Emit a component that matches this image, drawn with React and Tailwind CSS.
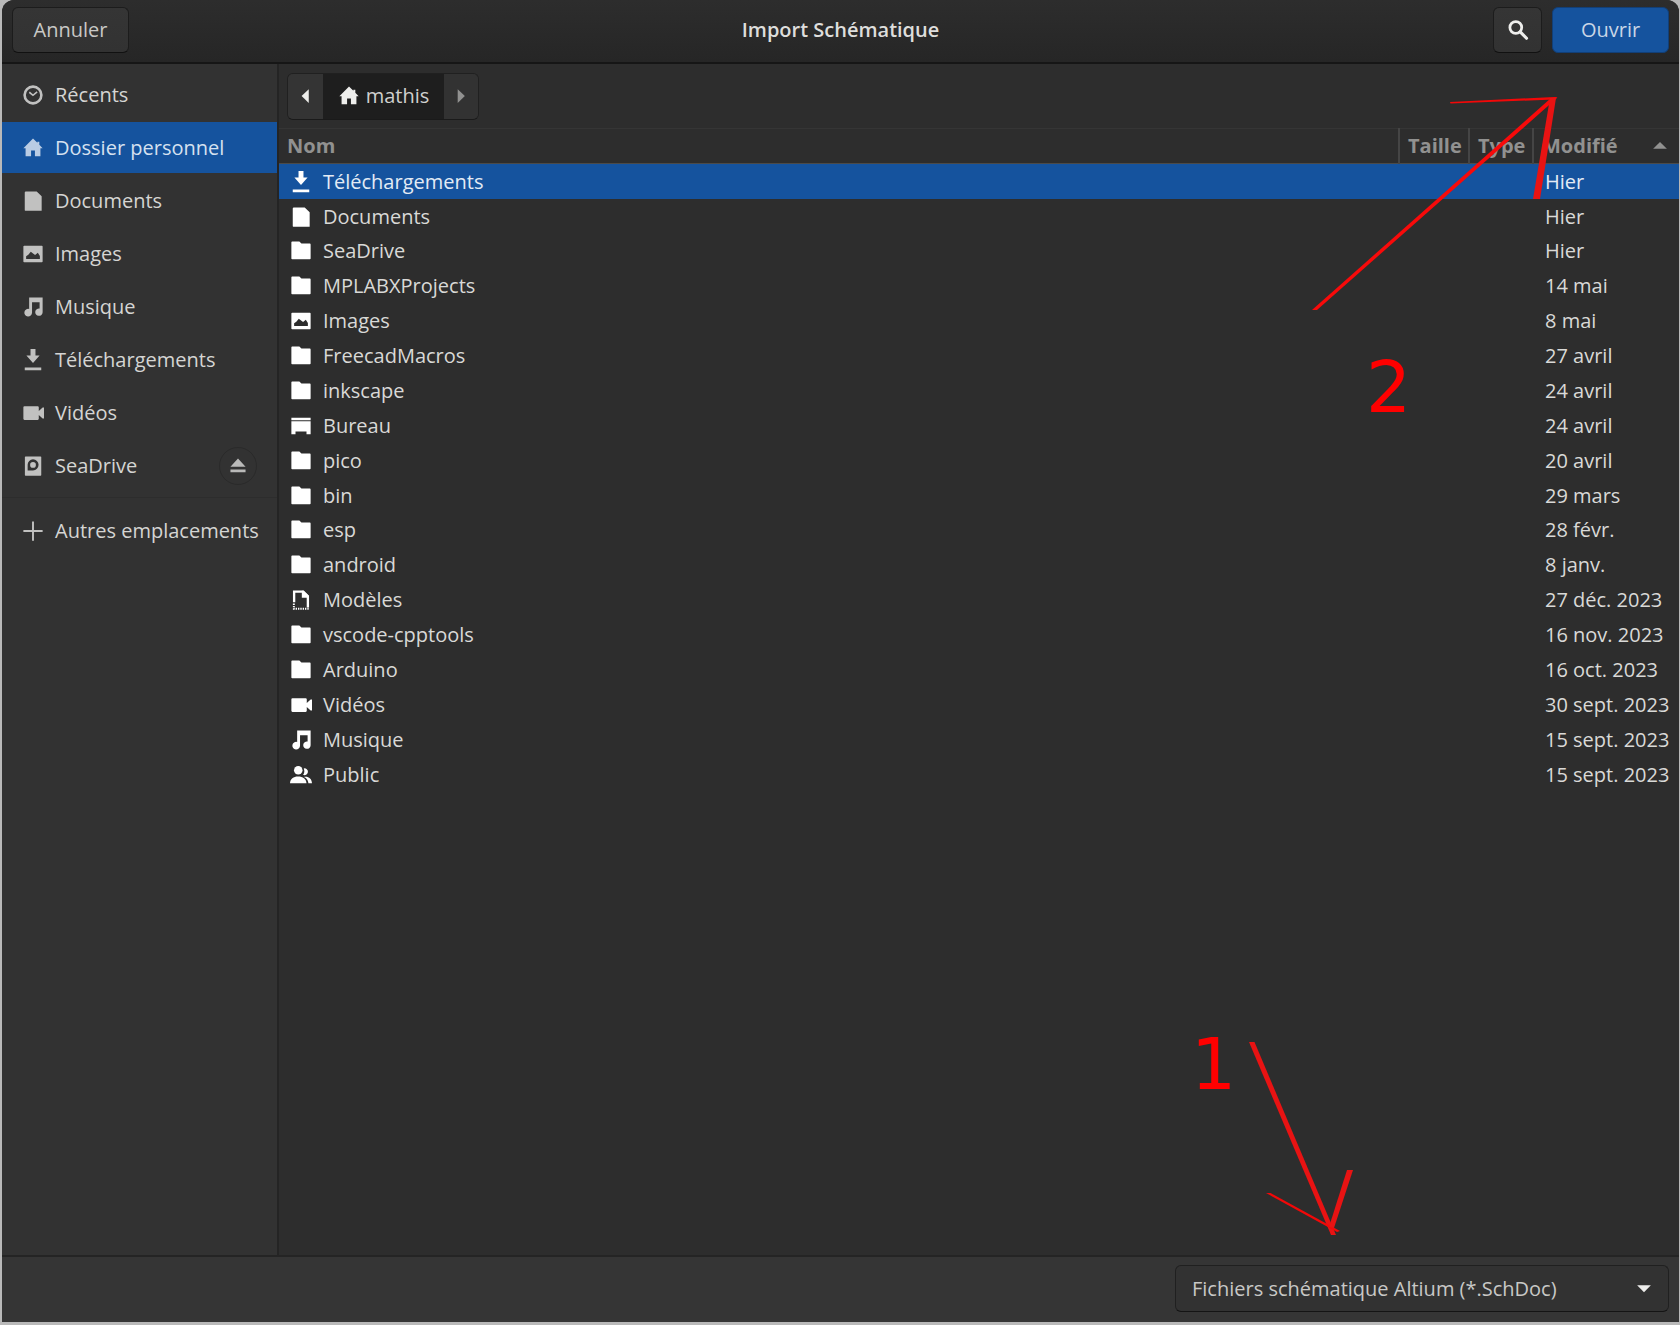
import React, { useState } from 'react';

const ICONS = {
    recent: (
        <>
            <circle cx="8" cy="8" r="6.1" fill="none" stroke="currentColor" strokeWidth="1.9" />
            <path d="M5.3 6 8 8.2 11 5.8" fill="none" stroke="currentColor" strokeWidth="1.2" />
        </>
    ),
    home: <path d="M8 1 1 8.2h1.6V14h4V9.8h2.8V14h4V8.2H15L12.6 5.6V3.4h-1.4v.8z" />,
    documents: <path d="M2.8 1h7.9l3.6 3.6V15H2.4a.4.4 0 0 1-.4-.4V1.8a.8.8 0 0 1 .8-.8z" />,
    images: (
        <path
            fillRule="evenodd"
            d="M1.6 2h12.8a.6.6 0 0 1 .6.6v10.8a.6.6 0 0 1-.6.6H1.6a.6.6 0 0 1-.6-.6V2.6a.6.6 0 0 1 .6-.6zM3 11.6h10V9.4l-1.5-2.3-2 1.7L6.4 6.3 4.6 8.6 3 9.6z"
        />
    ),
    music: (
        <path d="M5.2 1H15v10.8a2.7 2.7 0 1 1-2.2-2.7V4.6H7.3v7.6a2.8 2.8 0 1 1-2.1-2.8z" />
    ),
    download: <path d="M6.2 0h3.6v4.8H12.8L8 10.2 3.2 4.8h3zM2 13.4h12v2H2z" />,
    videos: <path d="M1.8 3h9.6a.8.8 0 0 1 .8.8v2.7L15 4h1v8h-1l-2.8-2.5v2.7a.8.8 0 0 1-.8.8H1.8a.8.8 0 0 1-.8-.8V3.8A.8.8 0 0 1 1.8 3z" />,
    drive: (
        <path
            fillRule="evenodd"
            d="M2.6 1h10.9a.5.5 0 0 1 .5.5v13a.5.5 0 0 1-.5.5H2.6a.5.5 0 0 1-.5-.5v-13a.5.5 0 0 1 .5-.5zM8 3.1a4 4 0 0 0-3.9 4v4.1H8a4 4 0 0 0 0-8.1zm0 2a2.1 2.1 0 1 1 0 4.2 2.1 2.1 0 0 1 0-4.2z"
        />
    ),
    plus: <path d="M7.3 1h1.4v6.3H15v1.4H8.7V15H7.3V8.7H1V7.3h6.3z" />,
    folder: <path d="M1.6 1h5.2l1.5 1.6h6.1a.6.6 0 0 1 .6.6v10.2a.6.6 0 0 1-.6.6H1.6a.6.6 0 0 1-.6-.6V1.6A.6.6 0 0 1 1.6 1z" />,
    desktop: <path d="M1 2h14v1.8H1zM1 4.6h14V14h-3v-2H4v2H1z" />,
    templates: (
        <>
            <path d="M3 9.6V1.9h6.6L13 5.3v8.1" fill="none" stroke="currentColor" strokeWidth="1.7" />
            <path d="M8.6 1.2h1.3L13.8 5v1.3H8.6z" />
            <path d="M2.8 10.6v3.8h11" fill="none" stroke="currentColor" strokeWidth="1.4" strokeDasharray="1 .7" />
        </>
    ),
    public: (
        <>
            <circle cx="6" cy="4.6" r="3.1" />
            <path d="M10 3.2a2.5 2.5 0 1 1-.5 4.7 4.8 4.8 0 0 0 .5-4.7zM0 14c.2-3.4 2.4-5 5.9-5s5.9 1.6 6.1 5zM10.2 9.4c3.4-.4 5.6 1.2 5.8 4.6h-2.6c-.2-2.2-1.2-3.7-3.2-4.6z" />
        </>
    ),
    eject: <path d="M8 2.5 13.5 8.600h-11zM2.500 10.600h11v2h-11z" />,
    search: (
        <>
            <circle cx="6.4" cy="6.2" r="4.3" fill="none" stroke="currentColor" strokeWidth="2" />
            <path d="m9.6 9.4 4.6 4.6" fill="none" stroke="currentColor" strokeWidth="2.3" strokeLinecap="round" />
        </>
    ),
    left: <path d="M10 3v10L4.8 8z" />,
    right: <path d="M5.6 3v10L10.800 8z" />,
    up: <path d="M8 5l5 5H3z" />,
    down: <path d="M8 11 3 6h10z" />,
};

const Icon = ({ name, className = '' }) => (
    <svg viewBox="0 0 16 16" fill="currentColor" className={`size-[22px] shrink-0 ${className}`} aria-hidden="true">
        {ICONS[name]}
    </svg>
);

const PLACES = [
    { icon: 'recent', label: 'Récents' },
    { icon: 'home', label: 'Dossier personnel' },
    { icon: 'documents', label: 'Documents' },
    { icon: 'images', label: 'Images' },
    { icon: 'music', label: 'Musique' },
    { icon: 'download', label: 'Téléchargements' },
    { icon: 'videos', label: 'Vidéos' },
    { icon: 'drive', label: 'SeaDrive', ejectable: true },
];

const FILES = [
    { icon: 'download', name: 'Téléchargements', modified: 'Hier' },
    { icon: 'documents', name: 'Documents', modified: 'Hier' },
    { icon: 'folder', name: 'SeaDrive', modified: 'Hier' },
    { icon: 'folder', name: 'MPLABXProjects', modified: '14 mai' },
    { icon: 'images', name: 'Images', modified: '8 mai' },
    { icon: 'folder', name: 'FreecadMacros', modified: '27 avril' },
    { icon: 'folder', name: 'inkscape', modified: '24 avril' },
    { icon: 'desktop', name: 'Bureau', modified: '24 avril' },
    { icon: 'folder', name: 'pico', modified: '20 avril' },
    { icon: 'folder', name: 'bin', modified: '29 mars' },
    { icon: 'folder', name: 'esp', modified: '28 févr.' },
    { icon: 'folder', name: 'android', modified: '8 janv.' },
    { icon: 'templates', name: 'Modèles', modified: '27 déc. 2023' },
    { icon: 'folder', name: 'vscode-cpptools', modified: '16 nov. 2023' },
    { icon: 'folder', name: 'Arduino', modified: '16 oct. 2023' },
    { icon: 'videos', name: 'Vidéos', modified: '30 sept. 2023' },
    { icon: 'music', name: 'Musique', modified: '15 sept. 2023' },
    { icon: 'public', name: 'Public', modified: '15 sept. 2023' },
];

const Header = () => (
    <header className="grid h-16 grid-cols-[1fr_auto_1fr] items-center border-b-2 border-[#161616] bg-linear-to-b from-[#2d2d2d] to-[#262626] px-2.5 pb-0.5">
        <button className="h-[46px] w-[117px] rounded-md border border-[#1c1c1c] border-b-[#111] bg-linear-to-b from-[#353535] to-[#323232] text-[#c8c8c6]">
            Annuler
        </button>
        <h1 className="font-semibold text-[#dededc]">Import Schématique</h1>
        <div className="flex justify-end gap-2.5">
            <button
                aria-label="Rechercher"
                className="flex h-[46px] w-[49px] items-center justify-center rounded-md border border-[#1c1c1c] border-b-[#111] bg-linear-to-b from-[#353535] to-[#323232] text-[#eeeeec]"
            >
                <Icon name="search" />
            </button>
            <button className="h-[46px] w-[117px] rounded-md border border-[#123f77] bg-[#15539e] text-[#c9d6e6]">Ouvrir</button>
        </div>
    </header>
);

const Sidebar = ({ current, onSelect }) => (
    <nav className="flex w-[277px] shrink-0 flex-col border-r-2 border-[#242424] bg-[#323232] pt-[5px]">
        <ul className="flex flex-col gap-0.5">
            {PLACES.map((place) => (
                <li key={place.label} className={`flex h-[51px] items-center pr-5 ${place.label === current ? 'bg-[#15539e]' : ''}`}>
                    <button
                        onClick={() => onSelect(place.label)}
                        className={`flex h-full flex-1 items-center gap-[11px] pl-5 text-left ${place.label === current ? 'text-[#d5e1f0]' : 'text-[#d5d5d3]'}`}
                    >
                        <Icon name={place.icon} className={place.label === current ? 'text-[#b9cce4]' : 'text-[#c1c1c0]'} />
                        {place.label}
                    </button>
                    {place.ejectable && (
                        <button
                            aria-label="Éjecter"
                            className="flex size-[38px] items-center justify-center rounded-full border border-[#2a2a2a] text-[#b9b9b8]"
                        >
                            <Icon name="eject" />
                        </button>
                    )}
                </li>
            ))}
        </ul>
        <hr className="mt-1.5 mb-[7px] border-[#2d2d2d]" />
        <button className="flex h-[51px] items-center gap-[11px] pl-5 text-left whitespace-nowrap text-[#d5d5d3]">
            <Icon name="plus" className="text-[#c1c1c0]" />
            Autres emplacements
        </button>
    </nav>
);

const PathBar = () => (
    <div className="flex h-16 items-center px-2">
        <div className="flex h-[47px] overflow-hidden rounded-md border border-[#202020] border-b-[#1a1a1a]">
            <button aria-label="Précédent" className="flex w-[35px] items-center justify-center bg-[#343434] text-[#eeeeec]">
                <Icon name="left" />
            </button>
            <button className="flex w-[121px] items-center justify-center gap-1.5 bg-[#1e1e1e] text-[#d0d0ce]">
                <Icon name="home" className="text-[#eeeeec]" />
                mathis
            </button>
            <button aria-label="Suivant" className="flex w-[34px] items-center justify-center bg-[#323232] text-[#919190]">
                <Icon name="right" />
            </button>
        </div>
    </div>
);

const FileTable = ({ selected, onSelect }) => (
    <table className="h-[664px] w-full table-fixed border-collapse text-left">
        <colgroup>
            <col />
            <col className="w-[70px]" />
            <col className="w-16" />
            <col className="w-[146px]" />
        </colgroup>
        <thead className="text-[#919190]">
            <tr className="h-[35px] border-t border-b border-t-[#353535] border-b-[#4b4b4a]">
                <th className="px-2 py-0 font-bold">Nom</th>
                <th className="border-l-2 border-[#454545] px-2 py-0 font-bold">Taille</th>
                <th className="border-l-2 border-[#454545] px-2 py-0 font-bold">Type</th>
                <th className="border-l-2 border-[#454545] px-2 py-0 font-bold" aria-sort="descending">
                    <div className="flex items-center justify-between">
                        Modifié
                        <Icon name="up" />
                    </div>
                </th>
            </tr>
        </thead>
        <tbody>
            {FILES.map((file) => (
                <tr
                    key={file.name}
                    onClick={() => onSelect(file.name)}
                    className={file.name === selected ? 'bg-[#15539e] text-[#e3ebf5]' : 'text-[#d9d9d7]'}
                >
                    <td className="px-[11px] py-0">
                        <div className="flex items-center gap-[11px]">
                            <Icon name={file.icon} className="text-white" />
                            {file.name}
                        </div>
                    </td>
                    <td className="p-0" />
                    <td className="p-0" />
                    <td className="py-0 pl-3 whitespace-nowrap">{file.modified}</td>
                </tr>
            ))}
        </tbody>
    </table>
);

// red step markers drawn over the dialog
const Annotations = () => (
    <svg
        viewBox="0 0 1680 1325"
        className="pointer-events-none absolute top-0 right-0 h-[1325px] w-[1680px] font-['DejaVu_Sans',sans-serif] text-[71px]"
        fill="#e81313"
    >
        <path d="M1312 310h5l240-212h-6z" fill="#f80a0a" />
        <path d="M1450 102l104-5h3.500l-3 2.500-104 4z" fill="#f20808" />
        <path d="M1550 98h6l-16 101h-7z" />
        <path d="M1249 1042h5.500l81.500 193h-5z" />
        <path d="M1266 1193h4.500l69.500 38-3 1z" fill="#f20808" />
        <path d="M1347 1170h6l-19 58-5-1z" />
        <text x="1366" y="412" fill="#ff0000">2</text>
        <text x="1191" y="1089" fill="#ff0000">1</text>
    </svg>
);

export default function App() {
    const [place, setPlace] = useState('Dossier personnel');
    const [selected, setSelected] = useState('Téléchargements');

    return (
        <div className="relative h-screen overflow-hidden bg-[#b9b9b9] pr-px pb-[3px] pl-0.5 font-['Open_Sans','Noto_Sans',sans-serif] text-[20px] leading-6">
            <div className="flex h-full flex-col overflow-hidden rounded-t-xl bg-[#2d2d2d]">
                <Header />
                <main className="flex min-h-0 flex-1">
                    <Sidebar current={place} onSelect={setPlace} />
                    <section className="min-w-0 flex-1">
                        <PathBar />
                        <FileTable selected={selected} onSelect={setSelected} />
                    </section>
                </main>
                <footer className="flex h-[67px] shrink-0 items-center justify-end border-t-2 border-[#242424] bg-[#353535] px-2.5 pb-0.5">
                    <div className="relative w-[494px]">
                        <select
                            aria-label="Type de fichier"
                            className="block h-[47px] w-full appearance-none rounded-md border border-[#202020] border-b-[#141414] bg-[#323232] px-4 text-[#c8c8c6]"
                        >
                            <option>Fichiers schématique Altium (*.SchDoc)</option>
                        </select>
                        <Icon name="down" className="pointer-events-none absolute top-3 right-3.5 text-[#eeeeec]" />
                    </div>
                </footer>
            </div>
            <Annotations />
        </div>
    );
}
